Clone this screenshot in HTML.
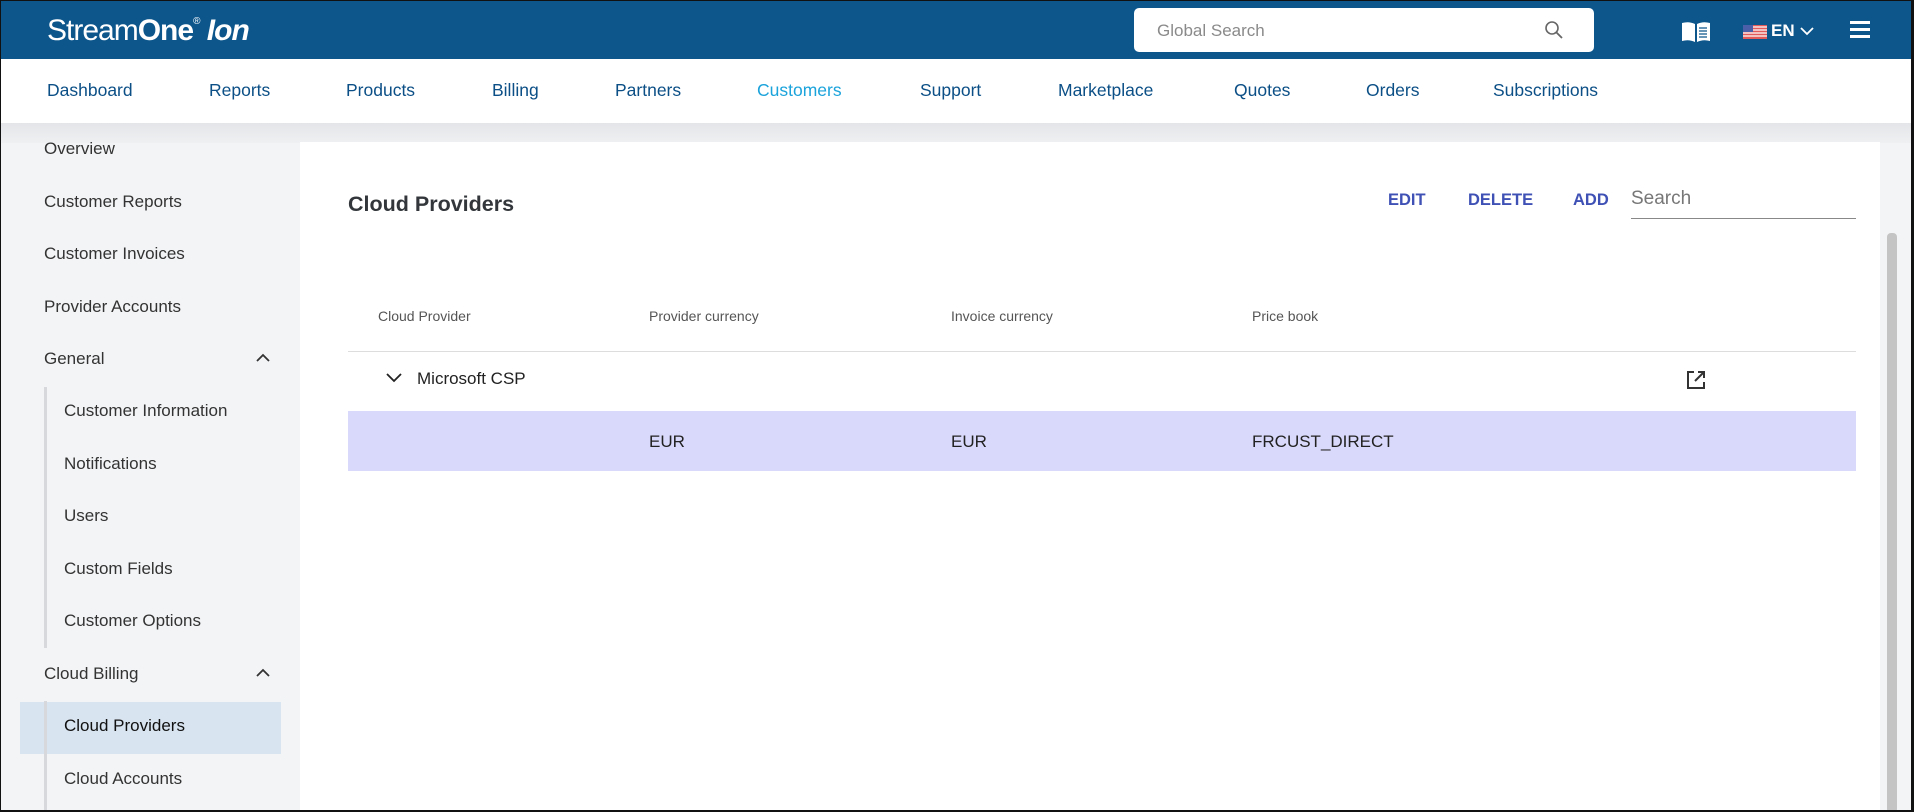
<!DOCTYPE html>
<html><head><meta charset="utf-8"><style>
*{box-sizing:border-box;margin:0;padding:0}
html,body{width:1914px;height:812px;overflow:hidden;background:#fff;font-family:"Liberation Sans",sans-serif}
#frame{position:absolute;left:0;top:0;width:1914px;height:812px;border:1px solid #111;border-right-width:3px;border-bottom-width:2px;overflow:hidden;background:#f3f4f6}
.hdr{position:absolute;left:0;top:0;width:100%;height:58px;background:#0c568c}
.logo{position:absolute;left:46px;top:13px;color:#fff;font-size:30px;letter-spacing:-1px}
.logo b{font-weight:bold}
.logo sup{font-size:10px;vertical-align:top;position:relative;top:2px}
.gs{position:absolute;left:1133px;top:7px;width:460px;height:44px;background:#fff;border-radius:5px}
.gs span{position:absolute;left:23px;top:13px;font-size:17px;color:#8a8a8a}
.nav{position:absolute;left:0;top:58px;width:100%;height:64px;background:#fff}
.nav span{position:absolute;top:21px;font-size:17.5px;color:#0b4f86}
.band{position:absolute;left:0;top:122px;width:100%;height:20px;background:linear-gradient(#e4e5e8,#eef0f2)}
.side div{position:absolute;font-size:17px;color:#333;left:43px}
.side .s{left:63px}
.vl{position:absolute;left:43px;width:3px;background:#d6d8db}
.main{position:absolute;left:299px;top:141px;width:1580px;height:670px;background:#fff}
.sb{position:absolute;left:1886px;top:232px;width:10px;height:580px;background:#c4c4c4;border-radius:4px}
.abs{position:absolute}
</style></head><body><div id="frame">
<div class="hdr">
 <div class="logo">Stream<b>One</b><sup>®</sup> <b><i>Ion</i></b></div>
 <div class="gs"><span>Global Search</span>
  <svg class="abs" style="left:410px;top:12px" width="20" height="20" viewBox="0 0 20 20"><circle cx="8" cy="8" r="6" fill="none" stroke="#666" stroke-width="1.6"/><path d="M12.5 12.5L18 18" stroke="#666" stroke-width="1.8"/></svg></div>
 <svg class="abs" style="left:1680px;top:20px" width="30" height="22" viewBox="0 0 30 22"><path d="M1 2Q8 0 14 3V21Q8 18 1 20Z M29 2Q22 0 16 3V21Q22 18 29 20Z" fill="#fff"/><path d="M18 7h8M18 10h8M18 13h8M18 16h8" stroke="#0c568c" stroke-width="1.3"/></svg>
 <svg class="abs" style="left:1742px;top:24px" width="24" height="14" viewBox="0 0 24 14"><rect width="24" height="14" fill="#e25a5a"/><path d="M0 2h24M0 5h24M0 8h24M0 11h24" stroke="#fff" stroke-width="1.2"/><rect width="10" height="7" fill="#4a5fa8"/></svg>
 <div class="abs" style="left:1770px;top:20px;color:#fff;font-size:17px;font-weight:bold">EN</div>
 <svg class="abs" style="left:1799px;top:25px" width="14" height="10" viewBox="0 0 14 10"><path d="M1 2l6 6 6-6" fill="none" stroke="#fff" stroke-width="1.8"/></svg>
 <div class="abs" style="left:1849px;top:20px;width:20px;height:3px;background:#fff;box-shadow:0 7px 0 #fff,0 14px 0 #fff"></div>
</div>
<div class="nav">
 <span style="left:46px">Dashboard</span><span style="left:208px">Reports</span><span style="left:345px">Products</span><span style="left:491px">Billing</span><span style="left:614px">Partners</span><span style="left:756px;color:#1ba3db">Customers</span><span style="left:919px">Support</span><span style="left:1057px">Marketplace</span><span style="left:1233px">Quotes</span><span style="left:1365px">Orders</span><span style="left:1492px">Subscriptions</span>
</div>
<div class="band"></div>
<div class="abs" style="left:19px;top:701px;width:261px;height:52px;background:#d8e4f0"></div>
<div class="vl" style="top:386px;height:261px"></div>
<div class="vl" style="top:700px;height:112px"></div>
<div class="side">
 <div style="top:138px">Overview</div>
 <div style="top:191px">Customer Reports</div>
 <div style="top:243px">Customer Invoices</div>
 <div style="top:296px">Provider Accounts</div>
 <div style="top:348px">General</div>
 <div class="s" style="top:400px">Customer Information</div>
 <div class="s" style="top:453px">Notifications</div>
 <div class="s" style="top:505px">Users</div>
 <div class="s" style="top:558px">Custom Fields</div>
 <div class="s" style="top:610px">Customer Options</div>
 <div style="top:663px">Cloud Billing</div>
 <div class="s" style="top:715px;color:#111">Cloud Providers</div>
 <div class="s" style="top:768px">Cloud Accounts</div>
</div>
<svg class="abs" style="left:255px;top:352px" width="14" height="9" viewBox="0 0 14 9"><path d="M1 8l6-6 6 6" fill="none" stroke="#333" stroke-width="1.8"/></svg>
<svg class="abs" style="left:255px;top:667px" width="14" height="9" viewBox="0 0 14 9"><path d="M1 8l6-6 6 6" fill="none" stroke="#333" stroke-width="1.8"/></svg>
<div class="main">
 <div class="abs" style="left:48px;top:50px;font-size:21.5px;font-weight:bold;color:#33373b">Cloud Providers</div>
 <div class="abs" style="left:1088px;top:49px;font-size:16.5px;font-weight:bold;color:#3f51b5">EDIT</div>
 <div class="abs" style="left:1168px;top:49px;font-size:16.5px;font-weight:bold;color:#3f51b5">DELETE</div>
 <div class="abs" style="left:1273px;top:49px;font-size:16.5px;font-weight:bold;color:#3f51b5">ADD</div>
 <div class="abs" style="left:1331px;top:46px;font-size:19px;color:#777">Search</div>
 <div class="abs" style="left:1331px;top:76px;width:225px;height:1px;background:#888"></div>
 <div class="abs" style="left:78px;top:166px;font-size:14px;color:#555">Cloud Provider</div>
 <div class="abs" style="left:349px;top:166px;font-size:14px;color:#555">Provider currency</div>
 <div class="abs" style="left:651px;top:166px;font-size:14px;color:#555">Invoice currency</div>
 <div class="abs" style="left:952px;top:166px;font-size:14px;color:#555">Price book</div>
 <div class="abs" style="left:48px;top:209px;width:1508px;height:1px;background:#ddd"></div>
 <svg class="abs" style="left:86px;top:231px" width="16" height="10" viewBox="0 0 16 10"><path d="M1 1l7 7 7-7" fill="none" stroke="#222" stroke-width="1.8"/></svg>
 <div class="abs" style="left:117px;top:227px;font-size:17px;color:#222">Microsoft CSP</div>
 <svg class="abs" style="left:1386px;top:228px" width="20" height="20" viewBox="0 0 20 20"><path d="M8 2H2V18H18V12" fill="none" stroke="#333" stroke-width="2"/><path d="M9 11L18 2M12 2H18V8" fill="none" stroke="#333" stroke-width="2"/></svg>
 <div class="abs" style="left:48px;top:269px;width:1508px;height:60px;background:#d9d9fb"></div>
 <div class="abs" style="left:349px;top:290px;font-size:17px;color:#222">EUR</div>
 <div class="abs" style="left:651px;top:290px;font-size:17px;color:#222">EUR</div>
 <div class="abs" style="left:952px;top:290px;font-size:17px;color:#222">FRCUST_DIRECT</div>
</div>
<div class="sb"></div>
</div></body></html>
